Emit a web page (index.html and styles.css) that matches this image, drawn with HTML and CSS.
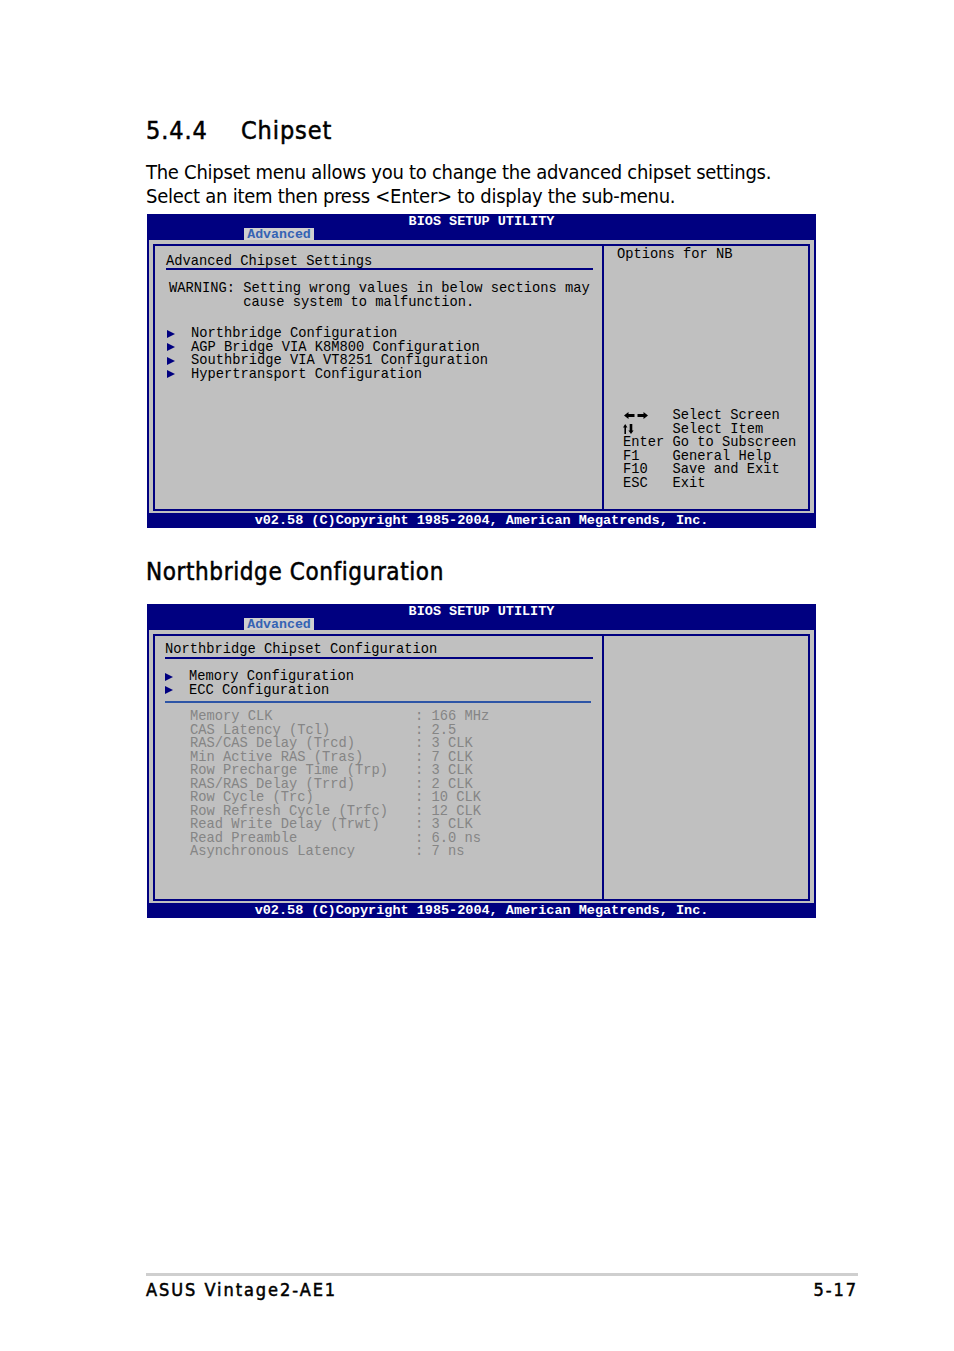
FILE: index.html
```html
<!DOCTYPE html>
<html>
<head>
<meta charset="utf-8">
<link rel="stylesheet" href="styles.css">
</head>
<body>
<div class="page">
  <h1 class="h1"><span class="num">5.4.4</span>Chipset</h1>
  <p class="intro">The Chipset menu allows you to change the advanced chipset settings.<br>Select an item then press &lt;Enter&gt; to display the sub-menu.</p>

  <div class="bios">
    <div class="bios-top">
      <div class="bios-title">BIOS SETUP UTILITY</div>
      <div class="tab">Advanced</div>
    </div>
    <div class="bios-body">
      <div class="panels">
        <div class="left left-a">
          <div class="ptitle">Advanced Chipset Settings</div>
          <pre class="warn">WARNING: Setting wrong values in below sections may
         cause system to malfunction.</pre>
          <div class="items items-a">
            <div class="item"><span class="tri"></span>Northbridge Configuration</div>
            <div class="item"><span class="tri"></span>AGP Bridge VIA K8M800 Configuration</div>
            <div class="item"><span class="tri"></span>Southbridge VIA VT8251 Configuration</div>
            <div class="item"><span class="tri"></span>Hypertransport Configuration</div>
          </div>
        </div>
        <div class="right">
          <div class="help">Options for NB</div>
          <div class="keys">
            <div class="krow"><span class="k"><svg class="arr-lr" width="24" height="7" viewBox="0 0 24 7"><path d="M0 3.5 L4.5 0 V2 H10.5 V5 H4.5 V7 Z M24 3.5 L19.5 0 V2 H13.5 V5 H19.5 V7 Z" fill="#000"/></svg></span><span>Select Screen</span></div>
            <div class="krow"><span class="k"><svg class="arr-ud" width="11" height="10" viewBox="0 0 11 10"><path d="M2.2 0 L4.4 3.5 H3 V10 H1.4 V3.5 H0 Z M8 10 L10.6 6.5 H9.3 V0 H6.7 V6.5 H5.4 Z" fill="#000"/></svg></span><span>Select Item</span></div>
            <div class="krow"><span class="k">Enter</span><span>Go to Subscreen</span></div>
            <div class="krow"><span class="k">F1</span><span>General Help</span></div>
            <div class="krow"><span class="k">F10</span><span>Save and Exit</span></div>
            <div class="krow"><span class="k">ESC</span><span>Exit</span></div>
          </div>
        </div>
      </div>
    </div>
    <div class="bios-foot">v02.58 (C)Copyright 1985-2004, American Megatrends, Inc.</div>
  </div>

  <h2 class="h2">Northbridge Configuration</h2>

  <div class="bios">
    <div class="bios-top">
      <div class="bios-title">BIOS SETUP UTILITY</div>
      <div class="tab">Advanced</div>
    </div>
    <div class="bios-body">
      <div class="panels">
        <div class="left left-b">
          <div class="ptitle ptitle-b">Northbridge Chipset Configuration</div>
          <div class="items items-b">
            <div class="item"><span class="tri"></span>Memory Configuration</div>
            <div class="item"><span class="tri"></span>ECC Configuration</div>
          </div>
          <div class="sep"></div>
          <div class="vals">
            <span>Memory CLK</span><span>: 166 MHz</span>
            <span>CAS Latency (Tcl)</span><span>: 2.5</span>
            <span>RAS/CAS Delay (Trcd)</span><span>: 3 CLK</span>
            <span>Min Active RAS (Tras)</span><span>: 7 CLK</span>
            <span>Row Precharge Time (Trp)</span><span>: 3 CLK</span>
            <span>RAS/RAS Delay (Trrd)</span><span>: 2 CLK</span>
            <span>Row Cycle (Trc)</span><span>: 10 CLK</span>
            <span>Row Refresh Cycle (Trfc)</span><span>: 12 CLK</span>
            <span>Read Write Delay (Trwt)</span><span>: 3 CLK</span>
            <span>Read Preamble</span><span>: 6.0 ns</span>
            <span>Asynchronous Latency</span><span>: 7 ns</span>
          </div>
        </div>
        <div class="right"></div>
      </div>
    </div>
    <div class="bios-foot">v02.58 (C)Copyright 1985-2004, American Megatrends, Inc.</div>
  </div>

  <div class="footer">
    <span>ASUS Vintage2-AE1</span>
    <span>5-17</span>
  </div>
</div>
</body>
</html>
```

FILE: styles.css
```css
html, body {
  margin: 0;
  padding: 0;
  background: #fff;
}
.page {
  width: 712px;
  margin-left: 146px;
  padding-top: 116px;
  font-family: "DejaVu Sans Condensed", "DejaVu Sans", sans-serif;
  color: #000;
}
.h1 {
  margin: 0;
  font-size: 25px;
  font-weight: normal;
  line-height: 30px;
  height: 30px;
  letter-spacing: 0.9px;
  -webkit-text-stroke: 0.5px #000;
}
.h1 .num {
  display: inline-block;
  width: 95px;
}
.intro {
  margin: 14px 0 0 0;
  font-size: 20px;
  line-height: 24px;
  letter-spacing: -0.27px;
  white-space: nowrap;
}
.bios {
  margin-top: 6px;
  margin-left: 1px;
  width: 669px;
  background: #000080;
  font-family: "Liberation Mono", "DejaVu Sans Mono", monospace;
  font-size: 13.75px;
  font-weight: normal;
}
.bios-top {
  height: 26px;
}
.bios-title {
  color: #fff;
  text-align: center;
  line-height: 15px;
  height: 13px;
  font-size: 13.5px;
  font-weight: bold;
}
.tab {
  margin-left: 97px;
  width: 70px;
  height: 12px;
  line-height: 13px;
  background: #cfcfcf;
  color: #3563b4;
  text-align: center;
  font-size: 13.25px;
  font-weight: bold;
  margin-top: 1px;
}
.bios-body {
  background: #c0c0c0;
  margin: 0 2px;
  padding: 4px 4px 2px 4px;
}
.panels {
  display: flex;
  border: 2px solid #000080;
  height: 263px;
  color: #000;
}
.left {
  border-right: 2px solid #000080;
  box-sizing: border-box;
  width: 449px;
}
.right {
  flex: 1;
  display: flex;
  flex-direction: column;
}
.left-a {
  padding: 7px 9px 0 11px;
}
.left-b {
  padding: 5px 9px 0 10px;
}
.ptitle {
  line-height: 17px;
  height: 15px;
  border-bottom: 2px solid #000080;
}
.ptitle-b {
  height: 16px;
}
.warn {
  margin: 12px 0 0 3px;
  font: inherit;
  line-height: 13.5px;
}
.items-a {
  margin-top: 18px;
}
.items-b {
  margin-top: 11px;
}
.item {
  display: flex;
  align-items: center;
  line-height: 13.5px;
  height: 13.5px;
}
.tri {
  display: inline-block;
  width: 0;
  height: 0;
  border-left: 8px solid #000080;
  border-top: 4.5px solid transparent;
  border-bottom: 4.5px solid transparent;
  margin-left: 1px;
  margin-right: 16px;
}
.items-b .tri {
  margin-left: 0;
}
.sep {
  margin-top: 4px;
  height: 2px;
  background: #2d55a6;
  margin-right: 2px;
}
.vals {
  margin-top: 7px;
  margin-left: 25px;
  display: grid;
  grid-template-columns: 225px auto;
  line-height: 13.5px;
  color: #858585;
}
.help {
  padding: 2px 0 0 13px;
  line-height: 13.5px;
}
.keys {
  margin-top: auto;
  padding: 0 0 19px 19px;
}
.krow {
  display: flex;
  line-height: 13.5px;
  height: 13.5px;
  align-items: center;
}
.k {
  width: 49.5px;
  flex: none;
  display: flex;
  align-items: center;
}
.arr-lr {
  margin-left: 1px;
}
.bios-foot {
  height: 15px;
  line-height: 16px;
  text-align: center;
  color: #fff;
  font-size: 13.5px;
  font-weight: bold;
}
.h2 {
  margin: 29px 0 0 0;
  font-size: 24px;
  font-weight: normal;
  line-height: 30px;
  height: 30px;
  letter-spacing: 0.6px;
  -webkit-text-stroke: 0.5px #000;
}
.h2 + .bios {
  margin-top: 17px;
}
.footer {
  margin-top: 355px;
  border-top: 3px solid #cfcfcf;
  padding-top: 3px;
  display: flex;
  justify-content: space-between;
  font-size: 18px;
  line-height: 22px;
  letter-spacing: 1.95px;
  -webkit-text-stroke: 0.5px #000;
}
```
